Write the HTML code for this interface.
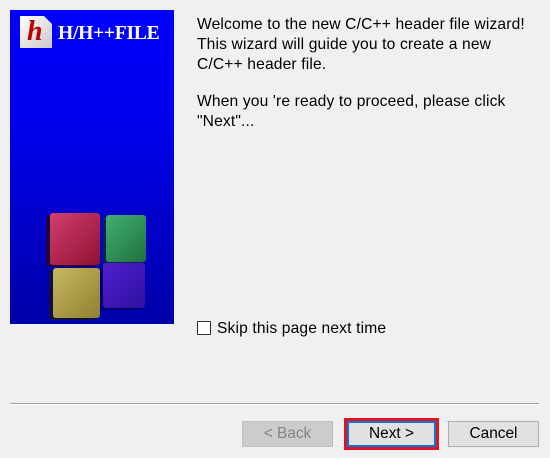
<!DOCTYPE html>
<html><head><style>
body{margin:0;width:550px;height:458px;background:#f0f0f0;position:relative;overflow:hidden;font-family:"Liberation Sans",sans-serif;color:#000}
.panel{position:absolute;left:10px;top:10px;width:164px;height:314px;background:linear-gradient(#0000ff,#0000e8 40%,#0000a8)}
.t{position:absolute;left:197px;font-size:15.6px;white-space:nowrap;letter-spacing:0.15px}
.btn{position:absolute;top:421px;height:26px;border:1px solid #adadad;background:#e1e1e1;font-size:15.4px;text-align:center;line-height:24px;box-sizing:border-box}
.cube{position:absolute;border-radius:3px}
</style></head><body>
<div class="panel">
 <div style="position:absolute;left:10px;top:6px;width:32px;height:32px;background:linear-gradient(135deg,#fff,#c8c8c8);clip-path:polygon(0 0,75% 0,100% 25%,100% 100%,0 100%)"></div>
 <div style="position:absolute;left:17px;top:6px;font:bold italic 28px 'Liberation Serif',serif;color:#c00000">h</div>
 <div style="position:absolute;left:48px;top:12px;font:bold 20px 'Liberation Serif',serif;color:#fff;letter-spacing:-0.3px;transform:scaleX(0.98);transform-origin:left">H/H++FILE</div>
 <div class="cube" style="left:40px;top:203px;width:50px;height:52px;background:linear-gradient(135deg,#d04070,#901030);box-shadow:-4px 2px 0 #200040"></div>
 <div class="cube" style="left:96px;top:205px;width:40px;height:47px;background:linear-gradient(135deg,#40b070,#207040);box-shadow:-3px 2px 0 #102050"></div>
 <div class="cube" style="left:43px;top:258px;width:47px;height:50px;background:linear-gradient(135deg,#c8b860,#908030);box-shadow:-4px 2px 0 #101040"></div>
 <div class="cube" style="left:93px;top:253px;width:42px;height:45px;background:linear-gradient(135deg,#5020d0,#3010a0);box-shadow:-3px 2px 0 #000070"></div>
</div>
<div class="t" style="top:16px">Welcome to the new C/C++ header file wizard!</div>
<div class="t" style="top:36px">This wizard will guide you to create a new</div>
<div class="t" style="top:56px">C/C++ header file.</div>
<div class="t" style="top:93px">When you 're ready to proceed, please click</div>
<div class="t" style="top:113px">"Next"...</div>
<div style="position:absolute;left:197px;top:321px;width:14px;height:14px;border:1px solid #333;background:#fff;box-sizing:border-box"></div>
<div class="t" style="left:217px;top:320px">Skip this page next time</div>
<div style="position:absolute;left:10px;top:403px;width:529px;height:1px;background:#a0a0a0"></div>
<div style="position:absolute;left:10px;top:404px;width:529px;height:1px;background:#fff"></div>
<div class="btn" style="left:242px;width:91px;background:#cccccc;border-color:#bfbfbf;color:#838383">&lt; Back</div>
<div style="position:absolute;left:344px;top:418px;width:95px;height:32px;background:#e81123"></div>
<div class="btn" style="left:347px;top:421px;width:89px;height:26px;border:2px solid #0078d7;line-height:22px">Next &gt;</div>
<div class="btn" style="left:448px;width:91px">Cancel</div>
</body></html>
